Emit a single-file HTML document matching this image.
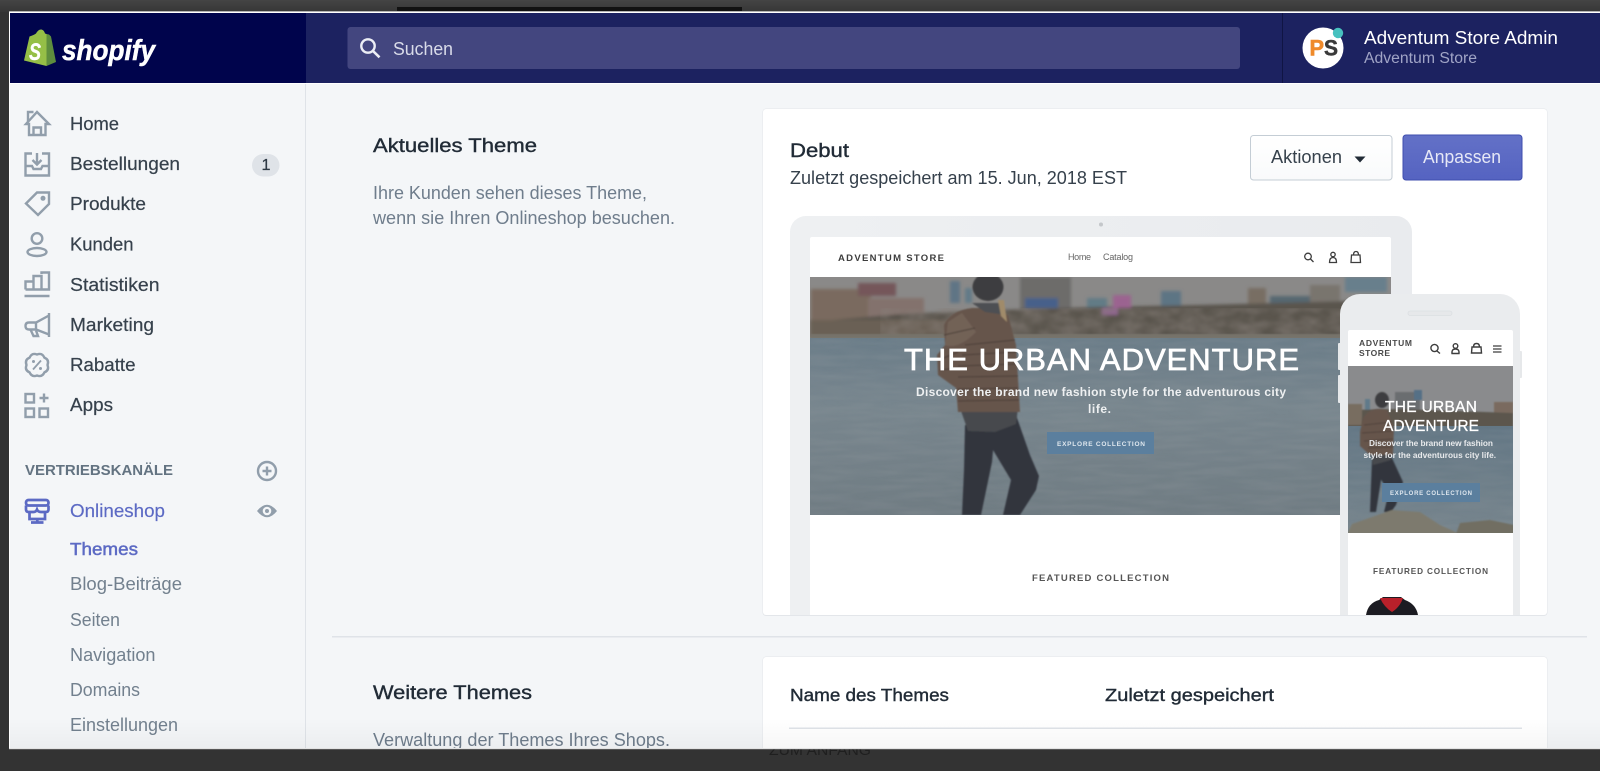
<!DOCTYPE html>
<html lang="de">
<head>
<meta charset="utf-8">
<title>Shopify Themes</title>
<style>
html,body{margin:0;padding:0;width:1600px;height:771px;overflow:hidden;background:#333}
svg{display:block;position:absolute;left:0;top:0;filter:blur(.35px)}
text{font-family:"Liberation Sans",sans-serif}
.nav{font-size:18px;fill:#36414c;stroke:#36414c;stroke-width:.2px}
.sub{font-size:18px;fill:#72808e}
.h{font-size:19.5px;fill:#212b36;stroke:#212b36;stroke-width:.38px}
.th{font-size:17.5px;fill:#212b36;stroke:#212b36;stroke-width:.38px}
.ic{fill:none;stroke:#919eab;stroke-width:2.4}
</style>
</head>
<body>
<svg width="1600" height="771" viewBox="0 0 1600 771" xmlns="http://www.w3.org/2000/svg">
<defs>
<linearGradient id="top" x1="0" y1="0" x2="0" y2="1"><stop offset="0" stop-color="#444"/><stop offset="1" stop-color="#363636"/></linearGradient>
<linearGradient id="anp" x1="0" y1="0" x2="0" y2="1"><stop offset="0" stop-color="#6371c7"/><stop offset="1" stop-color="#5563c1"/></linearGradient>
<linearGradient id="akt" x1="0" y1="0" x2="0" y2="1"><stop offset="0" stop-color="#fff"/><stop offset="1" stop-color="#f9fafb"/></linearGradient>
<linearGradient id="water" x1="0" y1="0" x2="0" y2="1"><stop offset="0" stop-color="#6b7d89"/><stop offset=".4" stop-color="#78868e"/><stop offset="1" stop-color="#707c83"/></linearGradient>
<linearGradient id="water2" x1="0" y1="0" x2="0" y2="1"><stop offset="0" stop-color="#637785"/><stop offset="1" stop-color="#77858d"/></linearGradient>
<linearGradient id="fade" x1="0" y1="0" x2="0" y2="1"><stop offset="0" stop-color="#000" stop-opacity="0"/><stop offset="1" stop-color="#000" stop-opacity=".035"/></linearGradient>
<linearGradient id="bz" x1="0" y1="0" x2="1" y2="0"><stop offset="0" stop-color="#eef0f2"/><stop offset="1" stop-color="#e9ebee"/></linearGradient>
<filter id="bl" x="-5%" y="-5%" width="110%" height="110%"><feGaussianBlur stdDeviation="1.5"/></filter>
<filter id="bs" x="-5%" y="-5%" width="110%" height="110%"><feGaussianBlur stdDeviation=".8"/></filter>
<filter id="tx" x="-5%" y="-20%" width="110%" height="140%"><feGaussianBlur stdDeviation=".25"/></filter>
<filter id="trees" x="0" y="0" width="100%" height="100%"><feTurbulence type="fractalNoise" baseFrequency=".05 .09" numOctaves="3" seed="4"/><feColorMatrix values="0 0 0 0 .24  0 0 0 0 .21  0 0 0 0 .19  1.6 0 0 0 -.45"/><feGaussianBlur stdDeviation="1.4"/></filter>
<filter id="ripples" x="0" y="0" width="100%" height="100%"><feTurbulence type="fractalNoise" baseFrequency=".02 .2" numOctaves="3" seed="9"/><feColorMatrix values="0 0 0 0 .36  0 0 0 0 .38  0 0 0 0 .4  1.2 0 0 0 -.42"/><feGaussianBlur stdDeviation=".8"/></filter>
<clipPath id="cardclip"><rect x="763" y="109" width="784" height="506" rx="3"/></clipPath>
<clipPath id="lh"><rect x="810" y="277" width="581" height="238"/></clipPath>
<clipPath id="ph"><rect x="1348" y="366" width="165" height="167"/></clipPath>
<clipPath id="frame"><rect x="10" y="13" width="1590" height="735"/></clipPath>
</defs>

<!-- window chrome -->
<rect width="1600" height="771" fill="#333"/>
<rect width="1600" height="12" fill="url(#top)"/>
<rect x="397" y="7" width="345" height="5" fill="#111"/>
<rect x="9" y="11" width="1591" height="2" fill="#b5b5b5"/>
<rect x="9" y="12" width="1591" height="737" fill="#fff"/>
<text x="769" y="755" font-size="14.5" fill="#1f1f1f" textLength="102" lengthAdjust="spacingAndGlyphs">ZUM ANFANG</text>

<g clip-path="url(#frame)">
<rect x="10" y="83" width="1590" height="665" fill="#f4f6f8"/>
<!-- header -->
<rect x="10" y="13" width="296" height="70" fill="#00044c"/>
<rect x="306" y="13" width="1294" height="70" fill="#1c2260"/>
<rect x="10" y="83" width="1590" height="1" fill="#fff"/>
<rect x="1282" y="13" width="1" height="70" fill="#101544"/>

<!-- logo -->
<path d="M24 60.5L29.5 36.500Q34 35 36 33.500Q38.500 29 41.500 29.500Q44 30 45 33.500L46.500 34L46.500 66Z" fill="#95bf47"/>
<path d="M46.500 34L49 34.500L51 36.500L56 62L46.500 66Z" fill="#5e8e3e"/>
<text x="29" y="60" font-size="24" font-weight="bold" font-style="italic" fill="#fff" stroke="#fff" stroke-width=".4" textLength="12" lengthAdjust="spacingAndGlyphs">S</text>
<text x="62" y="60" font-size="29" font-weight="bold" font-style="italic" fill="#fff" stroke="#fff" stroke-width=".5" textLength="93" lengthAdjust="spacingAndGlyphs">shopify</text>

<!-- search -->
<rect x="347.500" y="27" width="892.500" height="42" rx="3" fill="#43467f"/>
<circle cx="368" cy="46" r="6.700" fill="none" stroke="#eceef5" stroke-width="2.400"/>
<path d="M373 51L379.500 57.300" stroke="#eceef5" stroke-width="2.600" fill="none"/>
<text x="393" y="55" font-size="18" fill="#d9dbe9" textLength="60" lengthAdjust="spacingAndGlyphs">Suchen</text>

<!-- account -->
<circle cx="1323" cy="48" r="20.500" fill="#fff"/>
<text x="1309.500" y="55.500" font-size="22" font-weight="bold" fill="#ef8a2b" stroke="#ef8a2b" stroke-width=".6" textLength="14.500" lengthAdjust="spacingAndGlyphs">P</text>
<text x="1324" y="55.500" font-size="22" font-weight="bold" fill="#3a3a3a" stroke="#3a3a3a" stroke-width=".5" textLength="14" lengthAdjust="spacingAndGlyphs">S</text>
<circle cx="1338" cy="33" r="5.200" fill="#47c1bf"/>
<text x="1364" y="44" font-size="18" fill="#fff" textLength="194" lengthAdjust="spacingAndGlyphs">Adventum Store Admin</text>
<text x="1364" y="63" font-size="15.500" fill="#a0a4c6" textLength="113" lengthAdjust="spacingAndGlyphs">Adventum Store</text>

<!-- sidebar -->
<rect x="305" y="84" width="1" height="664" fill="#dfe3e8"/>

<g class="ic">
<path d="M26 124L37 112L49 124H45.500V135H29V124Z"/><path d="M28 122V112H33.500"/><path d="M33.500 135V127.500H41V135"/>
<path d="M32 153.500H25.500V175.500H49V153.500H42"/><path d="M25.500 166H32L33.500 169H41L42.500 166H49"/><path d="M37 153V164M32.500 160L37 164.500L41.500 160"/>
<path d="M49 192.500V204L38 215L26 203.500L37 192.500Z"/><circle cx="43" cy="198.300" r="1.300"/>
<circle cx="37" cy="238.500" r="5.300"/><ellipse cx="37" cy="252" rx="9.500" ry="4"/>
<path d="M25.500 289.500V281.500H33.500V289.500M33.500 281.500V276H41.500V289.500M41.500 274V272.500H49V289.500H25.500"/><path d="M24.500 296H49.500" stroke-width="2.600"/>
<path d="M49 313V337"/><path d="M49 315.500L36 322.500H29Q25.500 322.500 25.500 326Q25.500 329.500 29 329.500H36L49 334.500"/><path d="M36 322.500V329.500M30.500 329.500L33.500 336H38L36 330.500"/>
<path d="M47.500 365Q49.500 370.200 44.400 372.400Q42.200 377.500 37 375.500Q31.800 377.500 29.600 372.400Q24.500 370.200 26.500 365Q24.500 359.800 29.600 357.600Q31.800 352.500 37 354.500Q42.200 352.500 44.400 357.600Q49.500 359.800 47.500 365Z"/>
<path d="M33 369.500L41 360.500" stroke-width="1.800"/>
<rect x="25.500" y="394" width="8.500" height="8.500"/><rect x="25.500" y="408.500" width="8.500" height="8.500"/><rect x="39.500" y="408.500" width="8.500" height="8.500"/><path d="M44 393.500V402.500M39.500 398H48.500"/>
</g>
<circle cx="33.500" cy="361.500" r="1.500" fill="#919eab"/><circle cx="40.500" cy="368.500" r="1.500" fill="#919eab"/>

<g>
<text class="nav" x="70" y="130" textLength="49" lengthAdjust="spacingAndGlyphs">Home</text>
<text class="nav" x="70" y="170" textLength="110" lengthAdjust="spacingAndGlyphs">Bestellungen</text>
<text class="nav" x="70" y="210" textLength="76" lengthAdjust="spacingAndGlyphs">Produkte</text>
<text class="nav" x="70" y="250.500" textLength="63.500" lengthAdjust="spacingAndGlyphs">Kunden</text>
<text class="nav" x="70" y="291" textLength="89.500" lengthAdjust="spacingAndGlyphs">Statistiken</text>
<text class="nav" x="70" y="331" textLength="84" lengthAdjust="spacingAndGlyphs">Marketing</text>
<text class="nav" x="70" y="371" textLength="65.500" lengthAdjust="spacingAndGlyphs">Rabatte</text>
<text class="nav" x="70" y="411" textLength="43" lengthAdjust="spacingAndGlyphs">Apps</text>
</g>
<rect x="252" y="154" width="27.500" height="22.500" rx="11.250" fill="#dfe3e8"/>
<text x="261.500" y="170" font-size="15.500" fill="#2f3a45" stroke="#2f3a45" stroke-width=".25" textLength="9" lengthAdjust="spacingAndGlyphs">1</text>

<text x="25" y="475" font-size="14.500" font-weight="bold" fill="#637381" textLength="148" lengthAdjust="spacingAndGlyphs">VERTRIEBSKANÄLE</text>
<circle cx="267" cy="471" r="9" class="ic"/>
<path d="M262.500 471H271.500M267 466.500V475.500" class="ic"/>

<!-- store icon -->
<g fill="none" stroke="#5c6ac4" stroke-width="2.700">
<rect x="26" y="500" width="22.500" height="5.500" rx="2.500"/>
<path d="M26 505.500V509.500Q26 512 29 512H33.500Q36 512 37 509.500Q38 512 41 512H45.500Q48.500 512 48.500 509.500V505.500"/>
<path d="M29.500 512V519H45V512"/><path d="M37.300 519V522M31 522.500H43.500"/>
</g>
<text x="70" y="517" font-size="18" fill="#5c6ac4" stroke="#5c6ac4" stroke-width=".15" textLength="95" lengthAdjust="spacingAndGlyphs">Onlineshop</text>
<path d="M257 511Q267 498.500 277 511Q267 523.500 257 511Z" fill="#919eab"/><circle cx="267" cy="511" r="4.300" fill="#f4f6f8"/><circle cx="267" cy="511" r="2" fill="#919eab"/>

<text x="70" y="555" font-size="17.500" fill="#5c6ac4" stroke="#5c6ac4" stroke-width=".5" textLength="68" lengthAdjust="spacingAndGlyphs">Themes</text>
<text class="sub" x="70" y="590" textLength="112" lengthAdjust="spacingAndGlyphs">Blog-Beiträge</text>
<text class="sub" x="70" y="626" textLength="50" lengthAdjust="spacingAndGlyphs">Seiten</text>
<text class="sub" x="70" y="661" textLength="85.500" lengthAdjust="spacingAndGlyphs">Navigation</text>
<text class="sub" x="70" y="696" textLength="70" lengthAdjust="spacingAndGlyphs">Domains</text>
<text class="sub" x="70" y="731" textLength="108" lengthAdjust="spacingAndGlyphs">Einstellungen</text>

<!-- left column -->
<text class="h" x="373" y="152" textLength="164" lengthAdjust="spacingAndGlyphs">Aktuelles Theme</text>
<text x="373" y="199" font-size="18" fill="#6f7d8c" textLength="274" lengthAdjust="spacingAndGlyphs">Ihre Kunden sehen dieses Theme,</text>
<text x="373" y="224" font-size="18" fill="#6f7d8c" textLength="302" lengthAdjust="spacingAndGlyphs">wenn sie Ihren Onlineshop besuchen.</text>
<text class="h" x="373" y="699" textLength="159" lengthAdjust="spacingAndGlyphs">Weitere Themes</text>
<text x="373" y="746" font-size="18" fill="#6f7d8c" textLength="297" lengthAdjust="spacingAndGlyphs">Verwaltung der Themes Ihres Shops.</text>

<rect x="332" y="636" width="1255" height="1.500" fill="#dfe3e8"/>

<!-- theme card -->
<rect x="762.500" y="108.500" width="785" height="507.500" rx="3.500" fill="#e3e6ea"/>
<rect x="763" y="109" width="784" height="506" rx="3" fill="#fff"/>
<text class="h" x="790" y="157" textLength="59" lengthAdjust="spacingAndGlyphs">Debut</text>
<text x="790" y="184" font-size="18" fill="#36414c" textLength="337" lengthAdjust="spacingAndGlyphs">Zuletzt gespeichert am 15. Jun, 2018 EST</text>
<rect x="1250.500" y="135.500" width="141.500" height="44.500" rx="3" fill="url(#akt)" stroke="#c4cdd5"/>
<text x="1271" y="163" font-size="18" fill="#36414c" textLength="71" lengthAdjust="spacingAndGlyphs">Aktionen</text>
<path d="M1354.500 156.500H1365.500L1360 162.500Z" fill="#212b36"/>
<rect x="1403" y="135" width="119" height="45" rx="3" fill="url(#anp)" stroke="#3f4eae"/>
<text x="1423" y="163" font-size="18" fill="#e6e8f6" textLength="78" lengthAdjust="spacingAndGlyphs">Anpassen</text>

<g clip-path="url(#cardclip)">
<!-- laptop -->
<rect x="790" y="216" width="622" height="440" rx="16" fill="url(#bz)"/>
<circle cx="1101" cy="224.500" r="2" fill="#c4c7ca"/>
<rect x="810" y="237" width="581" height="400" rx="2" fill="#fff"/>
<g filter="url(#tx)">
<text x="838" y="261" font-size="9.500" font-weight="bold" fill="#3d3d3d" textLength="106" lengthAdjust="spacing">ADVENTUM STORE</text>
<text x="1068" y="260" font-size="9" fill="#666" textLength="23" lengthAdjust="spacing">Home</text>
<text x="1103" y="260" font-size="9" fill="#666" textLength="30" lengthAdjust="spacing">Catalog</text>
<g fill="none" stroke="#3d3d3d" stroke-width="1.300">
<circle cx="1308" cy="256.500" r="3.300"/><path d="M1310.500 259L1313.500 262"/>
<circle cx="1333" cy="254.500" r="2.200"/><path d="M1329.500 262.500Q1329.500 257.500 1333 257.500Q1336.500 257.500 1336.500 262.500Z"/>
<path d="M1351.500 255H1360L1360.500 262.500H1351Z"/><path d="M1353.500 255Q1353.500 251.500 1356 251.500Q1358.500 251.500 1358.500 255"/>
</g>
</g>
<!-- laptop hero -->
<g clip-path="url(#lh)">
<rect x="810" y="277" width="581" height="62" fill="#8a8988"/>
<g filter="url(#bl)">
<rect x="811" y="289" width="60" height="48" fill="#7a6b5e"/>
<rect x="858" y="283" width="38" height="13" fill="#75565a"/>
<rect x="868" y="298" width="56" height="32" fill="#83726d"/>
<rect x="950" y="281" width="10" height="22" fill="#5f7585"/>
<rect x="965" y="288" width="7" height="15" fill="#627a88"/>
<rect x="1020" y="277" width="51" height="45" fill="#6d6c6a"/>
<rect x="1087" y="298" width="20" height="11" fill="#627c86"/>
<rect x="1161" y="291" width="20" height="17" fill="#5d7584"/>
<rect x="1248" y="288" width="18" height="22" fill="#786e64"/>
<rect x="1270" y="296" width="40" height="14" fill="#566871"/>
<rect x="1345" y="277" width="42" height="15" fill="#677f8c"/>
<rect x="1310" y="285" width="30" height="22" fill="#79746e"/>
<path d="M810 322L900 314L1000 310L1100 307L1200 305L1391 300V337H810Z" fill="#5a554e"/>
<path d="M810 320H950V336H810Z" fill="#6b6054"/>
<rect x="1025" y="298" width="33" height="10" fill="#46608a"/>
<rect x="1113" y="295" width="18" height="13" fill="#9b6490"/>
<rect x="1102" y="308" width="16" height="7" fill="#90658f"/>
</g>
<rect x="880" y="308" width="511" height="28" filter="url(#trees)" opacity=".7"/>
<rect x="810" y="334" width="581" height="4" fill="#77736a" filter="url(#bs)"/>
<rect x="810" y="338" width="581" height="177" fill="url(#water)"/>
<rect x="810" y="338" width="581" height="177" filter="url(#ripples)" opacity=".3"/>
<g filter="url(#bs)">
<!-- legs -->
<path d="M965 425L995 428L992 462L981 515H962L964 470Z" fill="#33363d"/>
<path d="M990 425L1016 415L1030 455L1039 476L1036 490L1020 515H1003L1011 480L993 450Z" fill="#33363d"/>
<path d="M960 408H1018L1016 424L995 432L968 431Z" fill="#46484d"/>
<!-- jacket -->
<path d="M944 325Q950 311 972 308L995 308L1008 315L1016 345L1020 412H958L956 388L938 375L937 355L945 345Z" fill="#66554b"/>
<path d="M945 345Q958 350 976 332L962 313L948 322Z" fill="#75655a" opacity=".8"/>
<g stroke="#4a3d35" stroke-width="1.300" fill="none" opacity=".75">
<path d="M944 335L975 328M939 360L958 352M940 370L958 368M965 345L1015 340M962 355L1016 352M958 366L1017 364M958 377L1018 376M958 389L1018 388M958 401L1019 400"/>
</g>
<path d="M972 303H1000L1006 315L985 312Z" fill="#4d4f52"/>
<path d="M998 300L1004 300L1007 322L1001 316Z" fill="#a08b6a"/>
<ellipse cx="988" cy="287" rx="15.500" ry="14" fill="#3d3d40"/>
</g>
</g>
<g filter="url(#tx)" fill="#fff">
<text x="904" y="370" font-size="31" stroke="#fff" stroke-width=".7" textLength="395" lengthAdjust="spacing">THE URBAN ADVENTURE</text>
<text x="916" y="396" font-size="12" font-weight="bold" fill="#eef0f1" textLength="370" lengthAdjust="spacing">Discover the brand new fashion style for the adventurous city</text>
<text x="1088" y="413" font-size="12" font-weight="bold" fill="#eef0f1" textLength="23" lengthAdjust="spacing">life.</text>
</g>
<rect x="1047" y="432" width="107" height="22" fill="#5b7f9e"/>
<text x="1057" y="446" font-size="6.500" font-weight="bold" fill="#dfe7ee" textLength="88" lengthAdjust="spacing">EXPLORE COLLECTION</text>
<text x="1032" y="581" font-size="9.500" font-weight="bold" fill="#555" filter="url(#tx)" textLength="137" lengthAdjust="spacing">FEATURED COLLECTION</text>

<!-- phone -->
<rect x="1338" y="343" width="3" height="27" rx="1" fill="#e6e8ea"/>
<rect x="1338" y="375" width="3" height="28" rx="1" fill="#e6e8ea"/>
<rect x="1519" y="351" width="3" height="27" rx="1" fill="#e6e8ea"/>
<rect x="1340" y="294" width="180" height="360" rx="20" fill="#eaecee"/>
<rect x="1408" y="311" width="44" height="4.500" rx="2.250" fill="#e6e8ea" stroke="#dcdfe2" stroke-width=".8"/>
<rect x="1348" y="330" width="165" height="300" rx="2" fill="#fff"/>
<g filter="url(#tx)">
<text x="1359" y="346" font-size="8.500" font-weight="bold" fill="#4a4a4a" textLength="53" lengthAdjust="spacing">ADVENTUM</text>
<text x="1359" y="356" font-size="8.500" font-weight="bold" fill="#4a4a4a" textLength="31" lengthAdjust="spacing">STORE</text>
<g fill="none" stroke="#3d3d3d" stroke-width="1.400">
<circle cx="1434.500" cy="348" r="3.600"/><path d="M1437 351L1440 353.500"/>
<circle cx="1455.500" cy="346" r="2.300"/><path d="M1452 353.500Q1451.500 349 1455.500 349Q1459.500 349 1459 353.500Z"/>
<path d="M1472 347H1481L1481.500 353H1471.500Z"/><path d="M1473.500 347Q1473.500 343.500 1476.500 343.500Q1479.500 343.500 1479.500 347"/>
<path d="M1493 346H1501.500M1493 349H1501.500M1493 352H1501.500" stroke-width="1.200"/>
</g>
</g>
<g clip-path="url(#ph)">
<rect x="1348" y="366" width="165" height="62" fill="#8a8b8d"/>
<g filter="url(#bs)">
<rect x="1395" y="392" width="25" height="22" fill="#6b6d70"/>
<rect x="1414" y="390" width="8" height="10" fill="#557086"/>
<rect x="1365" y="399" width="5" height="12" fill="#607a8a"/>
<rect x="1494" y="402" width="19" height="14" fill="#7a6b5f"/>
<path d="M1348 410L1400 409L1513 413V427H1348Z" fill="#5c564e"/>
<path d="M1348 404H1362V425H1348Z" fill="#786d60"/>
</g>
<rect x="1348" y="426" width="165" height="107" fill="url(#water2)"/>
<rect x="1348" y="426" width="165" height="107" filter="url(#ripples)" opacity=".25"/>
<g filter="url(#bs)">
<path d="M1372 460H1384L1381 480L1376 512H1370L1371 485Z" fill="#33363d"/>
<path d="M1382 458H1392L1403 482L1396 505L1391 512H1384L1389 492L1380 478Z" fill="#33363d"/>
<path d="M1371 450H1392L1391 460L1373 465Z" fill="#46484d"/>
<path d="M1363 418Q1368 410 1378 409L1387 410L1394 428L1393 455L1370 455L1360 446L1360 432Z" fill="#66554b"/>
<path d="M1364 425L1392 422M1362 433L1393 431M1364 441L1393 439M1368 448L1393 447" stroke="#4a3d35" stroke-width=".9" fill="none" opacity=".75"/>
<ellipse cx="1382" cy="400" rx="7" ry="8" fill="#3d3d40"/>
<path d="M1347 534L1352 524L1372 517L1392 510L1420 512L1440 525L1460 534Z" fill="#7d7a6e"/>
<path d="M1456 534L1460 523L1490 520L1514 525V534Z" fill="#716e62"/>
</g>
</g>
<g filter="url(#tx)">
<text x="1385" y="412" font-size="15.500" fill="#fff" stroke="#fff" stroke-width=".3" textLength="92" lengthAdjust="spacing">THE URBAN</text>
<text x="1383" y="431" font-size="15.500" fill="#fff" stroke="#fff" stroke-width=".3" textLength="96" lengthAdjust="spacing">ADVENTURE</text>
<text x="1369" y="446" font-size="8.300" font-weight="bold" fill="#e8eaec" textLength="124" lengthAdjust="spacing">Discover the brand new fashion</text>
<text x="1363.500" y="458" font-size="8.300" font-weight="bold" fill="#e8eaec" textLength="132.500" lengthAdjust="spacing">style for the adventurous city life.</text>
</g>
<rect x="1382" y="483" width="98" height="19" fill="#5b7f9e"/>
<text x="1390" y="495" font-size="6" font-weight="bold" fill="#dfe7ee" textLength="82" lengthAdjust="spacing">EXPLORE COLLECTION</text>
<text x="1373" y="574" font-size="8.200" font-weight="bold" fill="#555" filter="url(#tx)" textLength="115" lengthAdjust="spacing">FEATURED COLLECTION</text>
<path d="M1366 615Q1368 603 1379 600L1383 597H1401L1405 600Q1416 604 1418 615Z" fill="#1f1f20" filter="url(#tx)"/>
<path d="M1380 598H1403Q1400 607 1392 612Q1384 607 1380 598Z" fill="#b8202a"/>
</g>

<!-- second card -->
<rect x="762.500" y="656.500" width="785" height="120" rx="3.500" fill="#e3e6ea"/>
<rect x="763" y="657" width="784" height="120" rx="3" fill="#fff"/>
<text class="th" x="790" y="701" textLength="159" lengthAdjust="spacingAndGlyphs">Name des Themes</text>
<text class="th" x="1105" y="701" textLength="169" lengthAdjust="spacingAndGlyphs">Zuletzt gespeichert</text>
<rect x="789" y="727.500" width="733" height="1.500" fill="#dfe3e8"/>

<rect x="10" y="718" width="1590" height="30" fill="url(#fade)"/>
</g>
<rect x="9" y="748" width="1591" height="1.200" fill="#e2e2e2"/>
</svg>
</body>
</html>
